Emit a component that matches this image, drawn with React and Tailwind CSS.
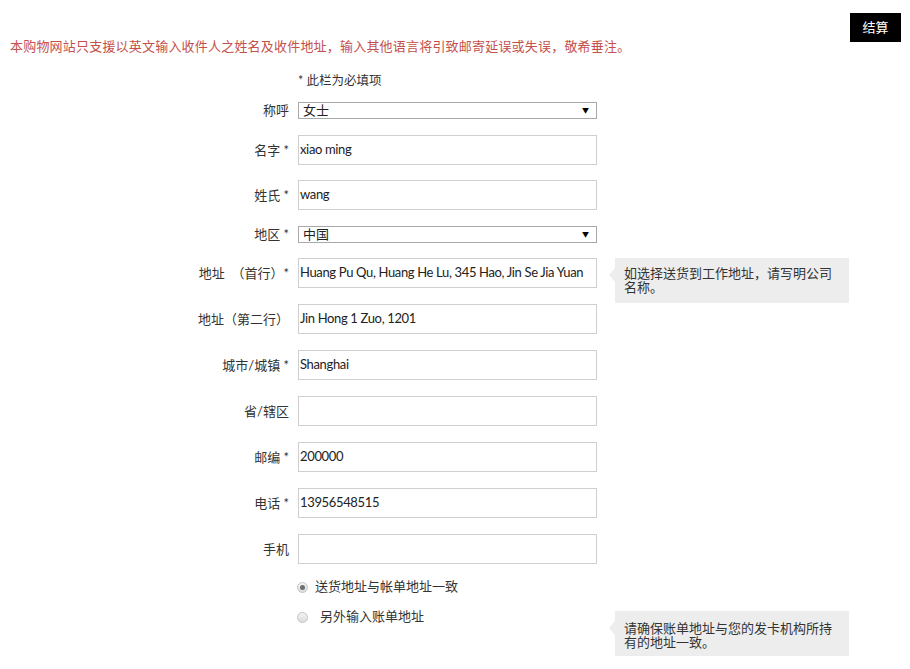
import React from "react";

const cjk = "font-['Lato','Noto_Sans_CJK_SC',sans-serif]";

function Label({ children }) {
  return (
    <div className="w-[289px] pr-0 text-right text-[13px] text-[#333] leading-none whitespace-pre">
      {children}
    </div>
  );
}

function InputRow({ label, value, mb = "mb-[16px]", children }) {
  return (
    <div className={`relative flex items-center h-[30px] ${mb}`}>
      <Label>{label}</Label>
      <div className="ml-[9px] w-[299px] h-[30px] border border-[#cfcfcf] bg-white flex items-center pl-[1px] text-[13px] text-[#222] font-['Lato','Noto_Sans_CJK_SC',sans-serif] tracking-[-0.35px]">
        {value}
      </div>
      {children}
    </div>
  );
}

function SelectRow({ label, value, mb }) {
  return (
    <div className={`flex items-center h-[17px] ${mb}`}>
      <Label>{label}</Label>
      <div className="ml-[9px] w-[299px] h-[17px] border border-[#a8a8a8] bg-white flex items-center justify-between pl-[4px] pr-[7px] text-[13px] text-[#222]">
        <span className="leading-none">{value}</span>
        <span className="text-[7px] leading-none text-black">▼</span>
      </div>
    </div>
  );
}

function Tip({ children, className }) {
  return (
    <div className={`absolute left-[615px] w-[234px] h-[45px] bg-[#ededed] pl-[9px] pr-[8px] text-[13px] leading-[14px] text-[#333] ${className}`}>
      <div className="absolute left-[-6px] top-[10px] w-0 h-0 border-y-[7px] border-y-transparent border-r-[6px] border-r-[#ededed]" />
      {children}
    </div>
  );
}

function Radio({ checked }) {
  return (
    <div className="w-[11px] h-[11px] rounded-full border border-[#c4c4c4] bg-gradient-to-b from-[#f4f4f4] to-[#dcdcdc] flex items-center justify-center">
      {checked && <div className="w-[5px] h-[5px] rounded-full bg-[#6e6e6e]" />}
    </div>
  );
}

export default function App() {
  return (
    <div className={`w-[910px] h-[669px] bg-white overflow-hidden ${cjk}`}>
      <div className="flex justify-end pt-[13px] pr-[9px]">
        <div className="w-[51px] h-[29px] bg-black text-white text-[13px] flex items-center justify-center">
          结算
        </div>
      </div>
      <div className="pl-[10px] mt-[-4px] h-[18px] flex items-center text-[13px] text-[#c4504c] tracking-[0.2px]">
        本购物网站只支援以英文输入收件人之姓名及收件地址，输入其他语言将引致邮寄延误或失误，敬希垂注。
      </div>
      <div className="pl-[298px] mt-[16px] h-[18px] flex items-center text-[12.5px] text-[#333]">
        * 此栏为必填项
      </div>
      <div className="mt-[12px]">
        <SelectRow label="称呼" value="女士" mb="mb-[16px]" />
        <InputRow label="名字 *" value="xiao ming" mb="mb-[15px]" />
        <InputRow label="姓氏 *" value="wang" mb="mb-[16px]" />
        <SelectRow label="地区 *" value="中国" mb="mb-[15px]" />
        <InputRow label="地址  （首行）*" value="Huang Pu Qu, Huang He Lu, 345 Hao, Jin Se Jia Yuan">
          <Tip className="top-0 pt-[8px]">如选择送货到工作地址，请写明公司名称。</Tip>
        </InputRow>
        <InputRow label="地址（第二行）" value="Jin Hong 1 Zuo, 1201" />
        <InputRow label="城市/城镇 *" value="Shanghai" />
        <InputRow label="省/辖区" value="" />
        <InputRow label="邮编 *" value="200000" />
        <InputRow label="电话 *" value="13956548515" />
        <InputRow label="手机" value="" mb="mb-0" />
      </div>
      <div className="pl-[297px] mt-[16px] h-[14px] flex items-center text-[13px] text-[#333]">
        <Radio checked />
        <span className="ml-[7px]">送货地址与帐单地址一致</span>
      </div>
      <div className="relative pl-[297px] mt-[16px] h-[14px] flex items-center text-[13px] text-[#333]">
        <Radio />
        <span className="ml-[12px]">另外输入账单地址</span>
        <Tip className="top-[1px] pt-[10px]">请确保账单地址与您的发卡机构所持有的地址一致。</Tip>
      </div>
    </div>
  );
}
